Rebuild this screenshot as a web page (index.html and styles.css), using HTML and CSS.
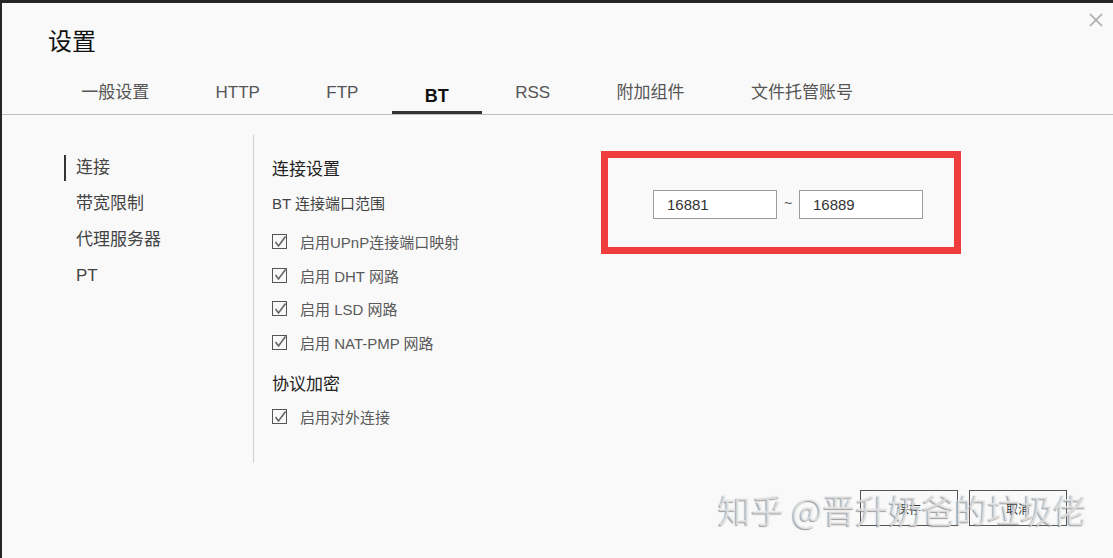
FILE: index.html
```html
<!DOCTYPE html>
<html lang="zh-CN">
<head>
    <meta charset="UTF-8">
    <meta name="viewport" content="width=device-width, initial-scale=1.0">
    <title>设置</title>
    <link rel="stylesheet" href="styles.css">
</head>
<body>
    <div class="dialog">
        <button class="close-btn" type="button" aria-label="关闭">
            <svg width="14" height="14" viewBox="0 0 14 14">
                <path d="M1 1 L13 13 M13 1 L1 13" stroke="#a6a6a6" stroke-width="1.5" fill="none"/>
            </svg>
        </button>

        <h1 class="dialog-title">设置</h1>

        <nav class="tabs">
            <span class="tab">一般设置</span>
            <span class="tab">HTTP</span>
            <span class="tab">FTP</span>
            <span class="tab active">BT</span>
            <span class="tab">RSS</span>
            <span class="tab">附加组件</span>
            <span class="tab">文件托管账号</span>
        </nav>

        <div class="main">
            <ul class="side-nav">
                <li class="active">连接</li>
                <li>带宽限制</li>
                <li>代理服务器</li>
                <li>PT</li>
            </ul>

            <div class="content">
                <div class="settings">
                    <h2 class="section-title">连接设置</h2>
                    <div class="field-label">BT 连接端口范围</div>
                    <label class="check-row"><span class="check"></span>启用UPnP连接端口映射</label>
                    <label class="check-row"><span class="check"></span>启用 DHT 网路</label>
                    <label class="check-row"><span class="check"></span>启用 LSD 网路</label>
                    <label class="check-row"><span class="check"></span>启用 NAT-PMP 网路</label>

                    <h2 class="section-title second">协议加密</h2>
                    <label class="check-row first"><span class="check"></span>启用对外连接</label>
                </div>

                <div class="port-box">
                    <input type="text" class="port-input" value="16881">
                    <span class="tilde">~</span>
                    <input type="text" class="port-input" value="16889">
                </div>
            </div>
        </div>

        <div class="footer">
            <button type="button" class="btn">保存</button>
            <button type="button" class="btn">取消</button>
        </div>

        <!-- 水印 -->
        <div class="watermark">知乎 @晋升奶爸的垃圾佬</div>
    </div>
</body>
</html>
```

FILE: styles.css
```css
html {
    background-color: #262626;
}

body {
    margin: 0;
    padding: 3px 0 0 2px;
    font-family: "Liberation Sans", "Noto Sans CJK SC", sans-serif;
    color: #444;
}

.dialog {
    position: relative;
    background-color: #f9f9f9;
    height: calc(100vh - 3px);
    overflow: hidden;
}

.close-btn {
    position: absolute;
    top: 10px;
    right: 10px;
    padding: 0;
    border: none;
    background: none;
    width: 14px;
    height: 14px;
    cursor: pointer;
}

.close-btn svg {
    display: block;
}

.dialog-title {
    margin: 24px 0 0 46px;
    font-size: 24px;
    line-height: 30px;
    font-weight: normal;
    color: #111;
}

.tabs {
    display: flex;
    margin-top: 17px;
    padding-left: 46px;
    border-bottom: 1px solid #bdbdbd;
}

.tab {
    padding: 7px 33.2px 6px;
    font-size: 17px;
    line-height: 24px;
    color: #555;
    border-bottom: 3px solid transparent;
}

.tab.active {
    padding-top: 10px;
    padding-bottom: 3px;
    font-size: 18px;
    font-weight: bold;
    color: #111;
    border-bottom-color: #333;
}

.main {
    display: flex;
    align-items: flex-start;
}

.side-nav {
    list-style: none;
    box-sizing: border-box;
    width: 252px;
    height: 328px;
    margin: 20px 0 0;
    padding: 20px 0 0 62px;
    border-right: 1px solid #cfcfcf;
}

.side-nav li {
    height: 26px;
    line-height: 26px;
    margin-bottom: 10px;
    padding-left: 10px;
    border-left: 2px solid transparent;
    font-size: 17px;
    color: #444;
}

.side-nav li.active {
    border-left-color: #333;
}

.content {
    display: flex;
    align-items: flex-start;
    padding: 36px 0 0 18px;
}

.settings {
    width: 329px;
    margin-top: 7px;
}

.section-title {
    margin: 0;
    font-size: 17px;
    line-height: 24px;
    font-weight: normal;
    color: #222;
}

.section-title.second {
    margin-top: 14px;
}

.field-label {
    margin-top: 12px;
    font-size: 15px;
    line-height: 20px;
    color: #444;
}

.check-row {
    display: flex;
    align-items: center;
    height: 33.5px;
    font-size: 15px;
    color: #5a5a5a;
}

.field-label + .check-row {
    margin-top: 11px;
}

.check-row.first {
    margin-top: 3px;
}

.check {
    box-sizing: border-box;
    width: 15px;
    height: 15px;
    margin-right: 13px;
    border: 1.5px solid #555;
    background: url("data:image/svg+xml;utf8,<svg xmlns='http://www.w3.org/2000/svg' width='12' height='12' viewBox='0 0 12 12'><path d='M1.5 6 L4.5 10 L11.5 0.5' stroke='%23666' stroke-width='1.6' fill='none'/></svg>") center / 12px 12px no-repeat;
}

.port-box {
    display: flex;
    align-items: flex-start;
    box-sizing: border-box;
    width: 360px;
    height: 103px;
    padding: 32px 0 0 45px;
    border: 7px solid #ef3d3d;
}

.port-input {
    box-sizing: border-box;
    width: 124px;
    height: 29px;
    padding: 0 13px;
    border: 1px solid #9a9a9a;
    background-color: #fff;
    font-family: inherit;
    font-size: 15px;
    color: #333;
    outline: none;
}

.tilde {
    width: 22px;
    text-align: center;
    font-size: 14px;
    line-height: 26px;
    color: #555;
}

.footer {
    display: flex;
    justify-content: flex-end;
    gap: 11px;
    margin-top: 27px;
    padding-right: 46px;
}

.btn {
    width: 98px;
    height: 36px;
    padding: 0;
    border: 1px solid #555;
    background-color: transparent;
    font-family: inherit;
    font-size: 12px;
    color: #333;
    cursor: pointer;
}

.watermark {
    position: absolute;
    left: 716px;
    top: 486px;
    font-family: "Noto Sans CJK SC", sans-serif;
    font-size: 33px;
    line-height: 40px;
    color: rgba(236, 236, 236, 0.75);
    text-shadow: -1px 1px 1px rgba(120, 120, 120, 0.7);
    white-space: nowrap;
    pointer-events: none;
}
```
